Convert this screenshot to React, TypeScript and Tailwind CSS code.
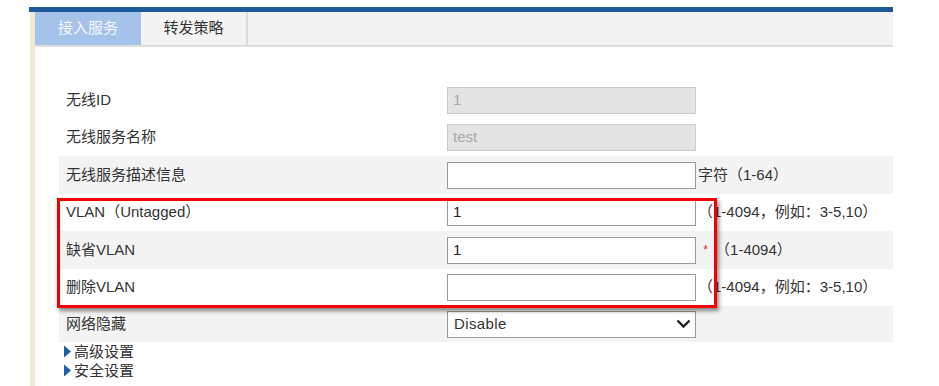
import React from 'react';

const FONT = { fontFamily: '"Liberation Sans", "Noto Sans CJK SC", sans-serif' };

type Row = {
    label: string;
    value?: string;
    disabled?: boolean;
    select?: boolean;
    hint?: string;
    star?: boolean;
    striped: boolean;
    height: string;
};

const ROWS: Row[] = [
    { label: '无线ID', value: '1', disabled: true, striped: false, height: 'h-[38px]' },
    { label: '无线服务名称', value: 'test', disabled: true, striped: false, height: 'h-[37px]' },
    { label: '无线服务描述信息', value: '', hint: '字符（1-64）', striped: true, height: 'h-[38px]' },
    { label: 'VLAN（Untagged）', value: '1', hint: '（1-4094，例如：3-5,10）', striped: false, height: 'h-[37px]' },
    { label: '缺省VLAN', value: '1', star: true, hint: '（1-4094）', striped: true, height: 'h-[38px]' },
    { label: '删除VLAN', value: '', hint: '（1-4094，例如：3-5,10）', striped: false, height: 'h-[37px]' },
    { label: '网络隐藏', select: true, striped: true, height: 'h-[36px]' },
];

const Field = ({ row }: { row: Row }) => {
    if (row.select) {
        return (
            <div className="w-[249px] h-[27px] border border-[#9a9a9a] bg-white flex items-center justify-between pl-[6px] pr-[4px] text-[15px] text-[#333]">
                <span className="tracking-[0.4px]">Disable</span>
                <svg width="15" height="10" viewBox="0 0 15 10" fill="none">
                    <path d="M1.5 1.5 L7.5 7.5 L13.5 1.5" stroke="#222" strokeWidth="2.4" />
                </svg>
            </div>
        );
    }
    return (
        <div
            className={`w-[249px] h-[27px] border flex items-center pl-[5px] text-[15px] ${
                row.disabled ? 'bg-[#e4e4e4] border-[#cbcbcb] text-[#a8a8a8]' : 'bg-white border-[#9a9a9a] text-[#222]'
            }`}
        >
            {row.value}
        </div>
    );
};

const App: React.FC = () => {
    return (
        <div className="relative w-[939px] h-[386px] bg-white overflow-hidden pt-[7px]" style={FONT}>
            <div className="ml-[29px] w-[864px]">
                {/* top blue bar */}
                <div className="h-[5px] bg-[#1c5a9c]" />

                <div className="ml-[1px] border-l-[5px] border-[#efe9d6] h-[374px]">
                    {/* tabs */}
                    <div className="flex h-[35px] bg-[#f3f3f3] border-b-2 border-[#dedede]">
                        <div className="w-[106px] bg-[#a5c2e8] text-[#f4f7fc] text-[15px] flex items-center justify-center">
                            接入服务
                        </div>
                        <div className="w-[107px] text-[#333] text-[15px] flex items-center justify-center border-r-2 border-[#dcdcdc]">
                            转发策略
                        </div>
                    </div>

                    {/* form */}
                    <div className="ml-[24px] w-[834px] mt-[34px]">
                        {ROWS.map((row) => (
                            <div
                                key={row.label}
                                className={`flex items-center ${row.height} ${row.striped ? 'bg-[#f3f3f3]' : ''}`}
                            >
                                <div className="w-[388px] pl-[7px] text-[15px] text-[#333]">{row.label}</div>
                                <Field row={row} />
                                {row.star && <span className="ml-[7px] text-[#e33] text-[13px]">*</span>}
                                {row.hint && (
                                    <span className={`${row.star ? 'ml-[7px]' : 'ml-[2px]'} text-[15px] text-[#333]`}>
                                        {row.hint}
                                    </span>
                                )}
                            </div>
                        ))}
                    </div>

                    {/* expanders */}
                    <div className="ml-[29px] text-[15px] text-[#333] leading-[19px]">
                        {['高级设置', '安全设置'].map((t) => (
                            <div key={t} className="flex items-center">
                                <svg width="8" height="13" viewBox="0 0 8 13" className="mr-[2px]">
                                    <path d="M0 0.5 L7 6.5 L0 12.5 Z" fill="#1a5fa8" />
                                </svg>
                                <span>{t}</span>
                            </div>
                        ))}
                    </div>
                </div>
            </div>

            {/* red highlight box */}
            <div className="absolute left-[57px] top-[198px] w-[660px] h-[110px] border-[3px] border-[#f50000] shadow-[2px_3px_4px_rgba(0,0,0,0.45)]" />
        </div>
    );
};

export default App;
